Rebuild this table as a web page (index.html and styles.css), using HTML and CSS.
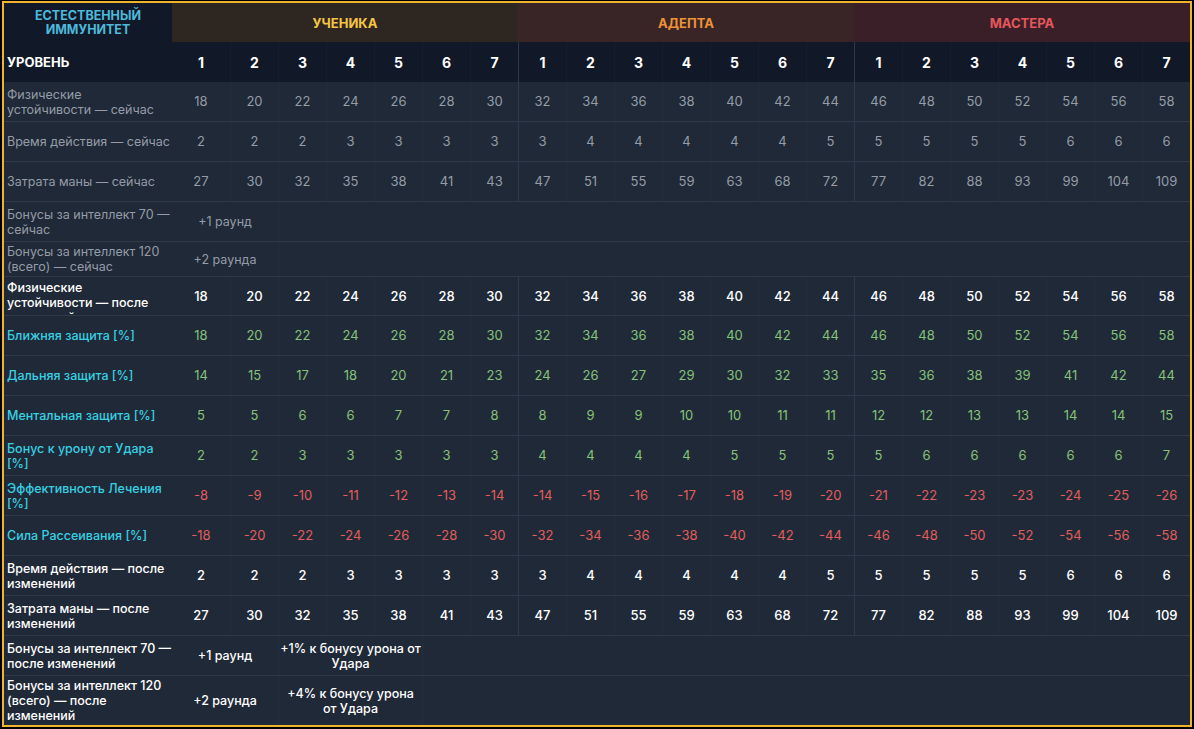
FILE: index.html
```html
<!DOCTYPE html>
<html lang="ru">
<head>
<meta charset="utf-8">
<title>Естественный иммунитет</title>
<link rel="stylesheet" href="styles.css">
</head>
<body>
<div class="frame">
  <div class="head">
    <div class="title">ЕСТЕСТВЕННЫЙ<br>ИММУНИТЕТ</div>
    <div class="tier t1">УЧЕНИКА</div>
    <div class="tier t2">АДЕПТА</div>
    <div class="tier t3">МАСТЕРА</div>
  </div>

  <div class="row levels">
    <div class="lab">УРОВЕНЬ</div>
    <div>1</div><div>2</div><div>3</div><div>4</div><div>5</div><div>6</div><div>7</div>
    <div>1</div><div>2</div><div>3</div><div>4</div><div>5</div><div>6</div><div>7</div>
    <div>1</div><div>2</div><div>3</div><div>4</div><div>5</div><div>6</div><div>7</div>
  </div>

  <div class="row now">
    <div class="lab">Физические<br>устойчивости — сейчас</div>
    <div>18</div><div>20</div><div>22</div><div>24</div><div>26</div><div>28</div><div>30</div>
    <div>32</div><div>34</div><div>36</div><div>38</div><div>40</div><div>42</div><div>44</div>
    <div>46</div><div>48</div><div>50</div><div>52</div><div>54</div><div>56</div><div>58</div>
  </div>

  <div class="row now">
    <div class="lab">Время действия — сейчас</div>
    <div>2</div><div>2</div><div>2</div><div>3</div><div>3</div><div>3</div><div>3</div>
    <div>3</div><div>4</div><div>4</div><div>4</div><div>4</div><div>4</div><div>5</div>
    <div>5</div><div>5</div><div>5</div><div>5</div><div>6</div><div>6</div><div>6</div>
  </div>

  <div class="row now">
    <div class="lab">Затрата маны — сейчас</div>
    <div>27</div><div>30</div><div>32</div><div>35</div><div>38</div><div>41</div><div>43</div>
    <div>47</div><div>51</div><div>55</div><div>59</div><div>63</div><div>68</div><div>72</div>
    <div>77</div><div>82</div><div>88</div><div>93</div><div>99</div><div>104</div><div>109</div>
  </div>

  <div class="row now bonus">
    <div class="lab">Бонусы за интеллект 70 — сейчас</div>
    <div class="span2">+1 раунд</div>
    <div class="rest19"></div>
  </div>

  <div class="row now bonus h35">
    <div class="lab">Бонусы за интеллект 120 (всего) — сейчас</div>
    <div class="span2">+2 раунда</div>
    <div class="rest19"></div>
  </div>

  <div class="row after h39">
    <div class="lab clip">Физические<br>устойчивости — после изменений</div>
    <div>18</div><div>20</div><div>22</div><div>24</div><div>26</div><div>28</div><div>30</div>
    <div>32</div><div>34</div><div>36</div><div>38</div><div>40</div><div>42</div><div>44</div>
    <div>46</div><div>48</div><div>50</div><div>52</div><div>54</div><div>56</div><div>58</div>
  </div>

  <div class="row stat up">
    <div class="lab">Ближняя защита [%]</div>
    <div>18</div><div>20</div><div>22</div><div>24</div><div>26</div><div>28</div><div>30</div>
    <div>32</div><div>34</div><div>36</div><div>38</div><div>40</div><div>42</div><div>44</div>
    <div>46</div><div>48</div><div>50</div><div>52</div><div>54</div><div>56</div><div>58</div>
  </div>

  <div class="row stat up">
    <div class="lab">Дальняя защита [%]</div>
    <div>14</div><div>15</div><div>17</div><div>18</div><div>20</div><div>21</div><div>23</div>
    <div>24</div><div>26</div><div>27</div><div>29</div><div>30</div><div>32</div><div>33</div>
    <div>35</div><div>36</div><div>38</div><div>39</div><div>41</div><div>42</div><div>44</div>
  </div>

  <div class="row stat up">
    <div class="lab">Ментальная защита [%]</div>
    <div>5</div><div>5</div><div>6</div><div>6</div><div>7</div><div>7</div><div>8</div>
    <div>8</div><div>9</div><div>9</div><div>10</div><div>10</div><div>11</div><div>11</div>
    <div>12</div><div>12</div><div>13</div><div>13</div><div>14</div><div>14</div><div>15</div>
  </div>

  <div class="row stat up">
    <div class="lab">Бонус к урону от Удара [%]</div>
    <div>2</div><div>2</div><div>3</div><div>3</div><div>3</div><div>3</div><div>3</div>
    <div>4</div><div>4</div><div>4</div><div>4</div><div>5</div><div>5</div><div>5</div>
    <div>5</div><div>6</div><div>6</div><div>6</div><div>6</div><div>6</div><div>7</div>
  </div>

  <div class="row stat down">
    <div class="lab">Эффективность Лечения [%]</div>
    <div>-8</div><div>-9</div><div>-10</div><div>-11</div><div>-12</div><div>-13</div><div>-14</div>
    <div>-14</div><div>-15</div><div>-16</div><div>-17</div><div>-18</div><div>-19</div><div>-20</div>
    <div>-21</div><div>-22</div><div>-23</div><div>-23</div><div>-24</div><div>-25</div><div>-26</div>
  </div>

  <div class="row stat down">
    <div class="lab">Сила Рассеивания [%]</div>
    <div>-18</div><div>-20</div><div>-22</div><div>-24</div><div>-26</div><div>-28</div><div>-30</div>
    <div>-32</div><div>-34</div><div>-36</div><div>-38</div><div>-40</div><div>-42</div><div>-44</div>
    <div>-46</div><div>-48</div><div>-50</div><div>-52</div><div>-54</div><div>-56</div><div>-58</div>
  </div>

  <div class="row after">
    <div class="lab">Время действия — после изменений</div>
    <div>2</div><div>2</div><div>2</div><div>3</div><div>3</div><div>3</div><div>3</div>
    <div>3</div><div>4</div><div>4</div><div>4</div><div>4</div><div>4</div><div>5</div>
    <div>5</div><div>5</div><div>5</div><div>5</div><div>6</div><div>6</div><div>6</div>
  </div>

  <div class="row after">
    <div class="lab">Затрата маны — после изменений</div>
    <div>27</div><div>30</div><div>32</div><div>35</div><div>38</div><div>41</div><div>43</div>
    <div>47</div><div>51</div><div>55</div><div>59</div><div>63</div><div>68</div><div>72</div>
    <div>77</div><div>82</div><div>88</div><div>93</div><div>99</div><div>104</div><div>109</div>
  </div>

  <div class="row after bonus">
    <div class="lab">Бонусы за интеллект 70 — после изменений</div>
    <div class="span2">+1 раунд</div>
    <div class="span3">+1% к бонусу урона от<br>Удара</div>
    <div class="rest16"></div>
  </div>

  <div class="row after bonus h49 last">
    <div class="lab">Бонусы за интеллект 120 (всего) — после изменений</div>
    <div class="span2">+2 раунда</div>
    <div class="span3">+4% к бонусу урона<br>от Удара</div>
    <div class="rest16"></div>
  </div>
</div>
</body>
</html>
```

FILE: styles.css
```css
* {
  box-sizing: border-box;
}

html, body {
  margin: 0;
  padding: 0;
  background: #000;
}

body {
  font-family: Inter, "Noto Sans", "Liberation Sans", sans-serif;
  font-size: 13px;
  line-height: 15px;
  color: #fff;
}

.frame {
  width: 1190px;
  height: 726px;
  margin: 1px 0 0 2px;
  border: 2px solid #eeb42f;
  background: #1f2937;
  overflow: hidden;
}

/* ---------- top header ---------- */
.head {
  display: grid;
  grid-template-columns: 168px 346px 336px 336px;
  height: 39px;
}

.head > div {
  display: flex;
  align-items: center;
  justify-content: center;
  text-align: center;
  font-weight: 700;
  text-transform: uppercase;
  line-height: 14px;
}

.title {
  background: #111827;
  color: #4db9dc;
  font-size: 12.5px;
}

.t1 { background: #2e2620; color: #f6c545; }
.t2 { background: #392526; color: #ee9238; }
.t3 { background: #3a1f29; color: #e6575b; }

/* ---------- rows ---------- */
.row {
  display: grid;
  grid-template-columns: 168px 58px repeat(20, 48px);
  height: 40px;
  border-bottom: 1px solid #2e394a;
  background: #1f2937;
}

.row > div {
  display: flex;
  align-items: center;
  justify-content: center;
  text-align: center;
  overflow: hidden;
}

.row > div:nth-child(n+3) {
  border-left: 1px solid rgba(255, 255, 255, 0.025);
}

.row:not(.bonus) > div:nth-child(9),
.row:not(.bonus) > div:nth-child(16) {
  border-left: 1px solid #2e3a4c;
}

.row > .lab {
  justify-content: flex-start;
  text-align: left;
  padding: 0 0 0 3px;
  font-size: 12.5px;
}

.row > .lab.clip {
  align-items: flex-start;
  padding-top: 3px;
}

.h35 { height: 35px; }
.h39 { height: 39px; }
.h49 { height: 49px; }
.last { border-bottom: 0; }

.levels {
  background: #111827;
  border-bottom: 0;
  font-weight: 700;
  font-size: 14px;
}

.levels > .lab {
  font-size: 13px;
}

/* current values */
.now {
  color: #959ca7;
}

/* after-change values */
.after {
  font-weight: 500;
  color: #fff;
}

/* stat rows */
.stat > .lab {
  color: #38d0e3;
  font-weight: 500;
}

.up { color: #86c27a; }
.down { color: #e35d5d; }

/* merged bonus cells */
.row > .span2 {
  grid-column: span 2;
  font-size: 12.5px;
}

.row > .span3 {
  grid-column: span 3;
  font-size: 12.5px;
}

.row > .rest19 { grid-column: span 19; }
.row > .rest16 { grid-column: span 16; }
```
